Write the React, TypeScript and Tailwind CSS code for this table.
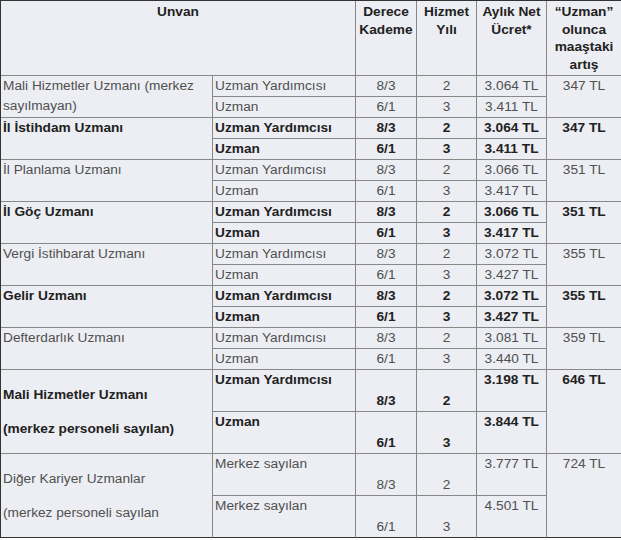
type Group = {
  title: string[]
  bold: boolean
  rows: [string, string, string, string][]
  artis: string
  tall?: boolean
}

const groups: Group[] = [
  {
    title: ["Mali Hizmetler Uzmanı (merkez sayılmayan)"],
    bold: false,
    rows: [
      ["Uzman Yardımcısı", "8/3", "2", "3.064 TL"],
      ["Uzman", "6/1", "3", "3.411 TL"],
    ],
    artis: "347 TL",
  },
  {
    title: ["İl İstihdam Uzmanı"],
    bold: true,
    rows: [
      ["Uzman Yardımcısı", "8/3", "2", "3.064 TL"],
      ["Uzman", "6/1", "3", "3.411 TL"],
    ],
    artis: "347 TL",
  },
  {
    title: ["İl Planlama Uzmanı"],
    bold: false,
    rows: [
      ["Uzman Yardımcısı", "8/3", "2", "3.066 TL"],
      ["Uzman", "6/1", "3", "3.417 TL"],
    ],
    artis: "351 TL",
  },
  {
    title: ["İl Göç Uzmanı"],
    bold: true,
    rows: [
      ["Uzman Yardımcısı", "8/3", "2", "3.066 TL"],
      ["Uzman", "6/1", "3", "3.417 TL"],
    ],
    artis: "351 TL",
  },
  {
    title: ["Vergi İstihbarat Uzmanı"],
    bold: false,
    rows: [
      ["Uzman Yardımcısı", "8/3", "2", "3.072 TL"],
      ["Uzman", "6/1", "3", "3.427 TL"],
    ],
    artis: "355 TL",
  },
  {
    title: ["Gelir Uzmanı"],
    bold: true,
    rows: [
      ["Uzman Yardımcısı", "8/3", "2", "3.072 TL"],
      ["Uzman", "6/1", "3", "3.427 TL"],
    ],
    artis: "355 TL",
  },
  {
    title: ["Defterdarlık Uzmanı"],
    bold: false,
    rows: [
      ["Uzman Yardımcısı", "8/3", "2", "3.081 TL"],
      ["Uzman", "6/1", "3", "3.440 TL"],
    ],
    artis: "359 TL",
  },
  {
    title: ["Mali Hizmetler Uzmanı", "(merkez personeli sayılan)"],
    bold: true,
    tall: true,
    rows: [
      ["Uzman Yardımcısı", "8/3", "2", "3.198 TL"],
      ["Uzman", "6/1", "3", "3.844 TL"],
    ],
    artis: "646 TL",
  },
  {
    title: ["Diğer Kariyer Uzmanlar", "(merkez personeli sayılan"],
    bold: false,
    tall: true,
    rows: [
      ["Merkez sayılan", "8/3", "2", "3.777 TL"],
      ["Merkez sayılan", "6/1", "3", "4.501 TL"],
    ],
    artis: "724 TL",
  },
]

export default function App() {
  const th = "border-r border-b border-[#888] align-top px-[2px] pt-[2px] leading-[17.7px] font-bold text-[#222] text-center"

  return (
    <div className="w-[621px] overflow-hidden bg-white">
      <table className="w-[622px] table-fixed border-separate border-spacing-0 border-t border-l border-[#333] bg-[#eceef3] text-[13.7px] font-['Liberation_Sans',Arial,sans-serif]">
        <colgroup>
          <col className="w-[212px]" />
          <col className="w-[143px]" />
          <col className="w-[61px]" />
          <col className="w-[60px]" />
          <col className="w-[70px]" />
          <col className="w-[75px]" />
        </colgroup>
        <thead>
          <tr className="h-[75px]">
            <th colSpan={2} className={th}>Unvan</th>
            <th className={th}>Derece Kademe</th>
            <th className={th}>Hizmet Yılı</th>
            <th className={th}>Aylık Net Ücret*</th>
            <th className={th}>“Uzman” olunca maaştaki artış</th>
          </tr>
        </thead>
        <tbody>
          {groups.map((g, gi) => {
            const last = gi === groups.length - 1
            const tone = g.bold ? "font-bold text-[#222]" : "font-normal text-[#505050]"
            const bb = last ? "border-b-[#333]" : ""
            const cell = `border-r border-b border-[#888] leading-[20px] ${tone}`
            return g.rows.map((r, ri) => (
              <tr key={`${gi}-${ri}`} className={g.tall ? "h-[42px]" : "h-[21px]"}>
                {ri === 0 && (
                  <td
                    rowSpan={2}
                    className={`${cell} ${bb} px-[2px] ${g.tall ? "align-middle" : "align-top"}`}
                  >
                    <div className="flex flex-col gap-[14px]">
                      {g.title.map((t) => (
                        <span key={t}>{t}</span>
                      ))}
                    </div>
                  </td>
                )}
                <td className={`${cell} ${ri === 1 ? bb : ""} align-top px-[2px]`}>{r[0]}</td>
                <td className={`${cell} ${ri === 1 ? bb : ""} text-center ${g.tall ? "align-bottom" : "align-top"}`}>{r[1]}</td>
                <td className={`${cell} ${ri === 1 ? bb : ""} text-center ${g.tall ? "align-bottom" : "align-top"}`}>{r[2]}</td>
                <td className={`${cell} ${ri === 1 ? bb : ""} text-center align-top`}>{r[3]}</td>
                {ri === 0 && (
                  <td rowSpan={2} className={`${cell} ${bb} text-center align-top`}>
                    {g.artis}
                  </td>
                )}
              </tr>
            ))
          })}
        </tbody>
      </table>
    </div>
  )
}
